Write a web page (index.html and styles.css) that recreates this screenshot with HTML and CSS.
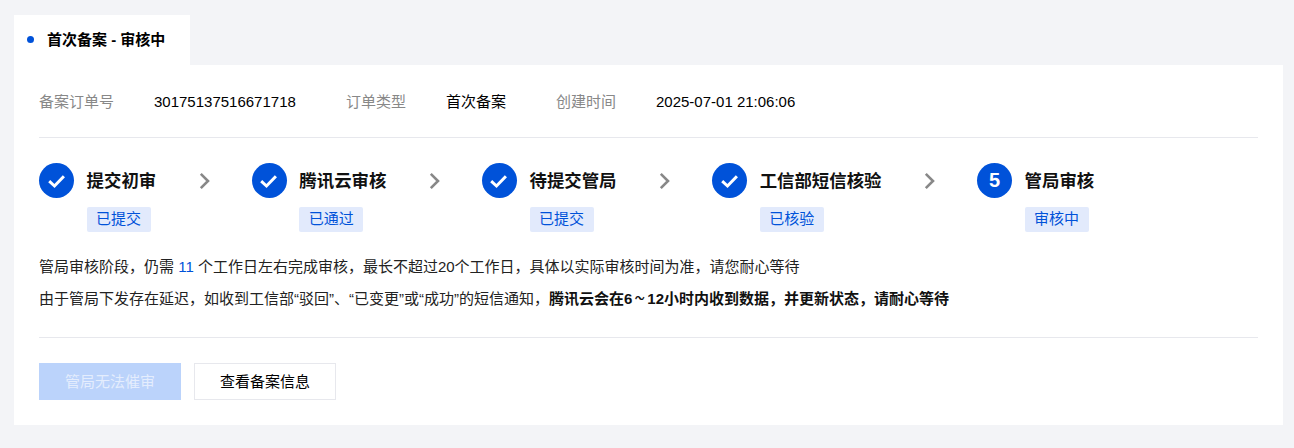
FILE: index.html
```html
<!DOCTYPE html>
<html lang="zh-CN">
<head>
<meta charset="utf-8">
<title>首次备案</title>
<link rel="stylesheet" href="styles.css">
</head>
<body>
<div class="tabs"><div class="tab"><span class="dot"></span><span class="tab-text">首次备案 - 审核中</span></div></div>
<main class="card">
  <section class="meta">
    <span class="label l1">备案订单号</span><span class="val v1">30175137516671718</span>
    <span class="label l2">订单类型</span><span class="val v2">首次备案</span>
    <span class="label l3">创建时间</span><span class="val">2025-07-01 21:06:06</span>
  </section>
  <section class="steps">
    <div class="step">
      <div class="step-head"><span class="circle"><svg width="20" height="20" viewBox="0 0 20 20"><path d="M2.2 10.2 L7.5 15 L16.9 5.2" fill="none" stroke="#fff" stroke-width="3"/></svg></span><span class="step-title">提交初审</span></div>
      <span class="tag">已提交</span>
    </div>
    <svg class="chev" width="14" height="20" viewBox="0 0 14 20"><path d="M2.8 2.8 L10 10 L2.8 17.2" fill="none" stroke="#888" stroke-width="2.6"/></svg>
    <div class="step">
      <div class="step-head"><span class="circle"><svg width="20" height="20" viewBox="0 0 20 20"><path d="M2.2 10.2 L7.5 15 L16.9 5.2" fill="none" stroke="#fff" stroke-width="3"/></svg></span><span class="step-title">腾讯云审核</span></div>
      <span class="tag">已通过</span>
    </div>
    <svg class="chev" width="14" height="20" viewBox="0 0 14 20"><path d="M2.8 2.8 L10 10 L2.8 17.2" fill="none" stroke="#888" stroke-width="2.6"/></svg>
    <div class="step">
      <div class="step-head"><span class="circle"><svg width="20" height="20" viewBox="0 0 20 20"><path d="M2.2 10.2 L7.5 15 L16.9 5.2" fill="none" stroke="#fff" stroke-width="3"/></svg></span><span class="step-title">待提交管局</span></div>
      <span class="tag">已提交</span>
    </div>
    <svg class="chev" width="14" height="20" viewBox="0 0 14 20"><path d="M2.8 2.8 L10 10 L2.8 17.2" fill="none" stroke="#888" stroke-width="2.6"/></svg>
    <div class="step">
      <div class="step-head"><span class="circle"><svg width="20" height="20" viewBox="0 0 20 20"><path d="M2.2 10.2 L7.5 15 L16.9 5.2" fill="none" stroke="#fff" stroke-width="3"/></svg></span><span class="step-title">工信部短信核验</span></div>
      <span class="tag">已核验</span>
    </div>
    <svg class="chev" width="14" height="20" viewBox="0 0 14 20"><path d="M2.8 2.8 L10 10 L2.8 17.2" fill="none" stroke="#888" stroke-width="2.6"/></svg>
    <div class="step">
      <div class="step-head"><span class="circle num">5</span><span class="step-title">管局审核</span></div>
      <span class="tag">审核中</span>
    </div>
  </section>
  <section class="notes">
    <p>管局审核阶段，仍需 <span class="blue">11</span> 个工作日左右完成审核，最长不超过20个工作日，具体以实际审核时间为准，请您耐心等待</p>
    <p>由于管局下发存在延迟，如收到工信部“驳回”、“已变更”或“成功”的短信通知，<b>腾讯云会在6<span class="tilde">～</span>12小时内收到数据，并更新状态，请耐心等待</b></p>
  </section>
  <section class="actions">
    <button class="btn primary" disabled>管局无法催审</button>
    <button class="btn">查看备案信息</button>
  </section>
</main>
</body>
</html>
```
FILE: styles.css
```css
* { box-sizing: border-box; }
html, body { margin: 0; padding: 0; }
body {
  width: 1294px; height: 448px; overflow: hidden;
  background: #f3f4f7;
  padding: 15px 11px 23px 14px;
  font-family: "Liberation Sans", "Noto Sans CJK SC", sans-serif;
  font-size: 15px; color: #000;
}
.tabs { display: flex; height: 50px; }
.tab {
  width: 176px; background: #fff; display: flex; align-items: center;
  padding-left: 13px; padding-bottom: 1px;
}
.dot { width: 7px; height: 7px; border-radius: 50%; background: #0052d9; margin-right: 13px; }
.tab-text { font-weight: 700; color: #000; padding-bottom: 2px; }
.card { background: #fff; height: 360px; padding: 0 25px; }
.meta { height: 73px; padding-top: 2px; display: flex; align-items: center; border-bottom: 1px solid #e7e8ed; line-height: 20px; }
.label { color: #888; }
.l1 { width: 115px; }
.v1 { width: 192px; }
.l2 { width: 100px; }
.v2 { width: 110px; }
.l3 { width: 100px; }
.steps { display: flex; align-items: flex-start; padding-top: 25px; }
.step { display: flex; flex-direction: column; align-items: flex-start; }
.step-head { display: flex; align-items: center; height: 35px; }
.circle {
  width: 35px; height: 35px; border-radius: 50%; background: #0052d9; color: #fff;
  display: flex; align-items: center; justify-content: center; margin-right: 12.6px;
}
.num { font-size: 20px; font-weight: 700; }
.step-title { font-size: 17.4px; font-weight: 700; color: #111; padding-bottom: 2px; }
.tag {
  margin: 9px 0 0 47.6px; height: 25px; line-height: 23px; padding: 0 9.5px;
  background: #e2eafc; color: #0052d9; border-radius: 2px;
}
.chev { margin: 8px 39.6px 0 42px; flex: none; }
.notes { padding-top: 25px; height: 106px; border-bottom: 1px solid #e7e8ed; }
.notes p { margin: 0 0 12px; line-height: 20px; color: #222; }
.notes b { color: #111; }
.tilde { display: inline-block; width: 15px; text-align: center; font-size: 10px; vertical-align: 2px; line-height: 1; }
.blue { color: #0052d9; }
.actions { display: flex; gap: 13px; padding-top: 25px; }
.btn {
  width: 142px; height: 37px; background: #fff; border: 1px solid #e7e8ed;
  font: inherit; color: #000; padding: 0 0 2px;
}
.btn.primary { background: #bbd3fb; border-color: #bbd3fb; color: #e4edfd; }
```
